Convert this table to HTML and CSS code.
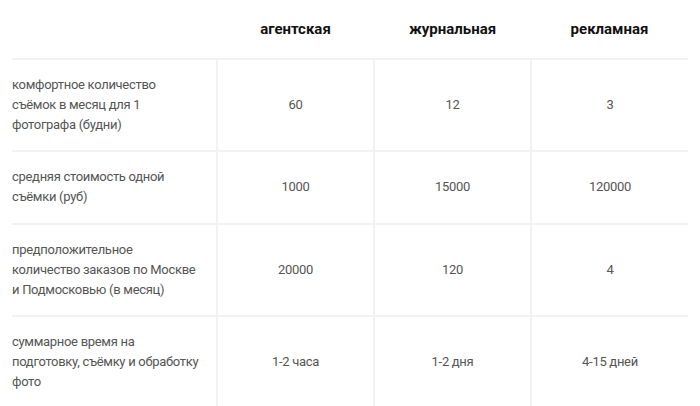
FILE: index.html
```html
<!DOCTYPE html>
<html lang="ru">
<head>
<meta charset="utf-8">
<link rel="stylesheet" href="styles.css">
</head>
<body>
<table class="cmp">
  <thead>
    <tr>
      <th class="label"></th>
      <th>агентская</th>
      <th>журнальная</th>
      <th>рекламная</th>
    </tr>
  </thead>
  <tbody>
    <tr>
      <td class="label">комфортное количество<br>съёмок в месяц для 1<br>фотографа (будни)</td>
      <td>60</td>
      <td>12</td>
      <td>3</td>
    </tr>
    <tr class="r2">
      <td class="label">средняя стоимость одной съёмки (руб)</td>
      <td>1000</td>
      <td>15000</td>
      <td>120000</td>
    </tr>
    <tr>
      <td class="label">предположительное количество заказов по Москве и Подмосковью (в месяц)</td>
      <td>20000</td>
      <td>120</td>
      <td>4</td>
    </tr>
    <tr>
      <td class="label">суммарное время на подготовку, съёмку и обработку фото</td>
      <td>1-2 часа</td>
      <td>1-2 дня</td>
      <td>4-15 дней</td>
    </tr>
  </tbody>
</table>
</body>
</html>
```
FILE: styles.css
```css
html, body {
  margin: 0;
  padding: 0;
  background: #fff;
}
body {
  padding: 0 12px;
  font-family: Roboto, "Liberation Sans", Arial, sans-serif;
}
.cmp {
  width: 676px;
  border-collapse: collapse;
  table-layout: fixed;
}
.cmp th {
  height: 58px;
  padding: 0;
  font-size: 15px;
  font-weight: 700;
  color: #111;
  text-align: center;
  vertical-align: middle;
  border-bottom: 2px solid #f2f2f2;
}
.cmp th.label {
  width: 205px;
}
.cmp td {
  padding: 15px 0;
  font-size: 13px;
  letter-spacing: -0.3px;
  line-height: 20px;
  color: #555;
  text-align: center;
  vertical-align: middle;
  border-bottom: 2px solid #f2f2f2;
  border-left: 2px solid #f2f2f2;
}
.cmp td.label {
  text-align: left;
  border-left: none;
  padding-right: 13px;
}
.cmp tr.r2 td {
  padding: 15px 0 16px;
}
.cmp tr.r2 td.label {
  padding-right: 13px;
}
```
